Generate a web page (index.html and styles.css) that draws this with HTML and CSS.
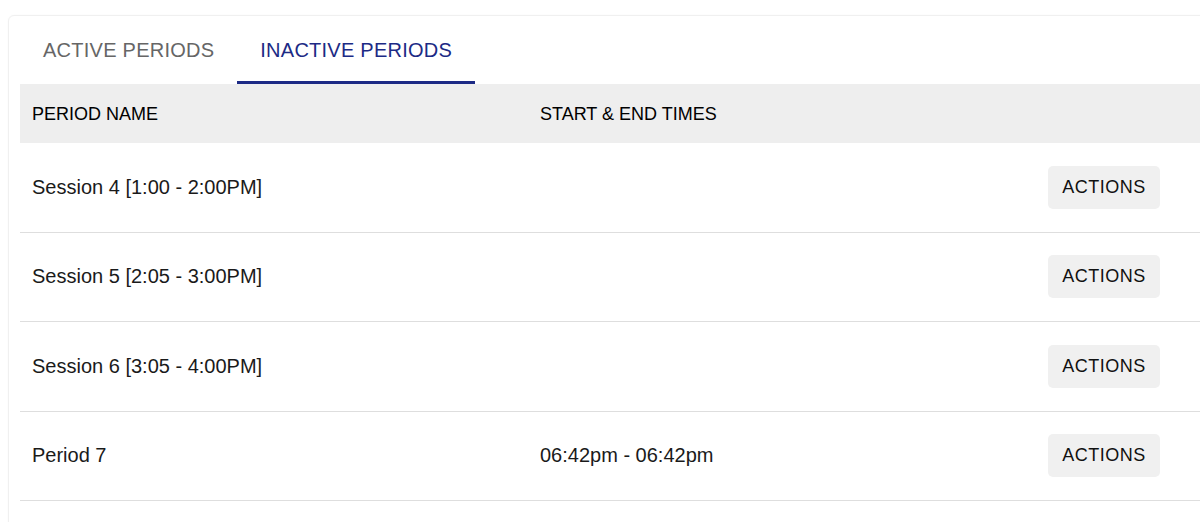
FILE: index.html
```html
<!DOCTYPE html>
<html>
<head>
<meta charset="utf-8">
<link rel="stylesheet" href="styles.css">
</head>
<body>
<div class="card">
  <div class="tabs">
    <div class="tab">ACTIVE PERIODS</div>
    <div class="tab active">INACTIVE PERIODS</div>
  </div>
  <div class="table">
    <div class="row head">
      <div class="cell">PERIOD NAME</div>
      <div class="cell">START &amp; END TIMES</div>
      <div class="cell"></div>
    </div>
    <div class="row">
      <div class="cell">Session 4 [1:00 - 2:00PM]</div>
      <div class="cell"></div>
      <div class="cell act"><button class="btn">ACTIONS</button></div>
    </div>
    <div class="row">
      <div class="cell">Session 5 [2:05 - 3:00PM]</div>
      <div class="cell"></div>
      <div class="cell act"><button class="btn">ACTIONS</button></div>
    </div>
    <div class="row">
      <div class="cell">Session 6 [3:05 - 4:00PM]</div>
      <div class="cell"></div>
      <div class="cell act"><button class="btn">ACTIONS</button></div>
    </div>
    <div class="row">
      <div class="cell">Period 7</div>
      <div class="cell">06:42pm - 06:42pm</div>
      <div class="cell act"><button class="btn">ACTIONS</button></div>
    </div>
  </div>
</div>
</body>
</html>
```

FILE: styles.css
```css
html, body {
  margin: 0;
  padding: 0;
  background: #ffffff;
  overflow: hidden;
}
body {
  font-family: "Liberation Sans", Arial, Helvetica, sans-serif;
  color: #1a1a1a;
  padding: 15px 0 0 8px;
  height: 522px;
  box-sizing: border-box;
}
.card {
  width: 1240px;
  border: 1px solid #f0f0f0;
  border-radius: 6px 0 0 0;
  box-shadow: 0 0 2px rgba(0,0,0,0.03);
  padding: 0 0 40px 11px;
  box-sizing: border-box;
}
.tabs {
  display: flex;
  height: 68px;
}
.tab {
  display: flex;
  align-items: center;
  padding: 4px 23px 0;
  font-size: 20px;
  letter-spacing: 0.25px;
  color: #666666;
  box-sizing: border-box;
  border-bottom: 3px solid transparent;
}
.tab.active {
  color: #1c2a85;
  border-bottom-color: #1c2a85;
}
.table {
  display: flex;
  flex-direction: column;
}
.row {
  display: grid;
  grid-template-columns: 508px 520px 1fr;
  align-items: center;
  height: 89.5px;
  border-bottom: 1px solid #dedede;
  box-sizing: border-box;
  font-size: 20px;
  color: #1a1a1a;
}
.row.head {
  height: 59px;
  background: #eeeeee;
  border-bottom: none;
  font-size: 18px;
  color: #000000;
  padding-top: 2px;
}
.cell {
  padding: 0 12px;
}
.cell.act {
  padding: 0;
}
.btn {
  width: 112px;
  height: 43px;
  border: none;
  border-radius: 5px;
  background: #f0f0f0;
  font-family: "Liberation Sans", Arial, Helvetica, sans-serif;
  font-size: 18px;
  letter-spacing: 0.5px;
  color: #111111;
  padding: 0;
}
```
